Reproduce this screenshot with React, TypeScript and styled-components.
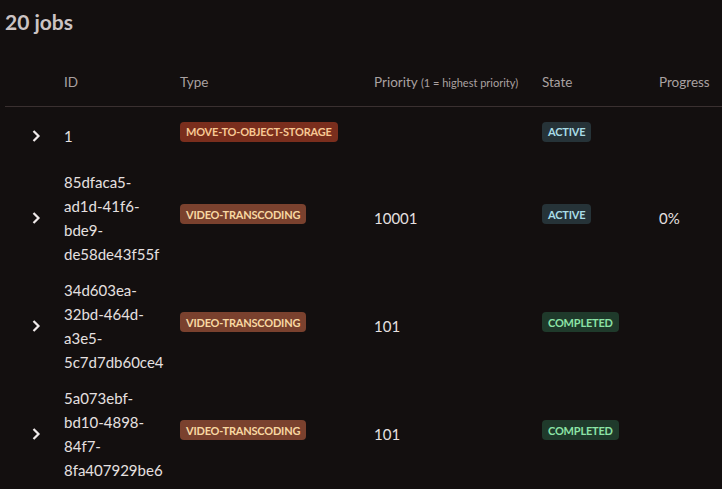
import React from 'react';
import styled, { createGlobalStyle } from 'styled-components';

type JobState = 'active' | 'completed';
type JobType = 'move-to-object-storage' | 'video-transcoding';

type Job = {
  id: string;
  type: JobType;
  priority?: number;
  state: JobState;
  progress?: number;
};

const jobs: Job[] = [
  { id: '1', type: 'move-to-object-storage', state: 'active' },
  { id: '85dfaca5-ad1d-41f6-bde9-de58de43f55f', type: 'video-transcoding', priority: 10001, state: 'active', progress: 0 },
  { id: '34d603ea-32bd-464d-a3e5-5c7d7db60ce4', type: 'video-transcoding', priority: 101, state: 'completed' },
  { id: '5a073ebf-bd10-4898-84f7-8fa407929be6', type: 'video-transcoding', priority: 101, state: 'completed' },
];

const typeColors: Record<JobType, { bg: string; fg: string }> = {
  'move-to-object-storage': { bg: '#7a2e1d', fg: '#f7c893' },
  'video-transcoding': { bg: '#7a412e', fg: '#f8d8a2' },
};

const stateColors: Record<JobState, { bg: string; fg: string }> = {
  active: { bg: '#263338', fg: '#a9dde6' },
  completed: { bg: '#1f3a2b', fg: '#8ce3a6' },
};

const GlobalStyle = createGlobalStyle`
  body {
    margin: 0;
    background: #130f0f;
    color: #e6e0e0;
    font-family: Lato, "Noto Sans", sans-serif;
    overflow: hidden;
  }
`;

const Page = styled.div`
  padding: 0 0 0 5px;
`;

const Title = styled.h1`
  margin: 8px 0 0;
  font-size: 21px;
  line-height: 28px;
  font-weight: 700;
  color: #cbc3c3;
`;

const Grid = styled.div`
  display: grid;
  grid-template-columns: 59px 116px 194px 168px 117px 1fr;
  margin-top: 36px;
`;

const HeadRow = styled.div`
  display: contents;
`;

const HeadCell = styled.div`
  font-size: 13.5px;
  line-height: 20px;
  color: #aaa1a1;
  padding-bottom: 13px;
  border-bottom: 1px solid #3a3030;
  white-space: nowrap;
`;

const HeadNote = styled.span`
  font-size: 11px;
`;

const Row = styled.div`
  display: contents;
`;

const Cell = styled.div`
  display: flex;
  align-items: center;
  min-height: 57px;
  padding: 6px 0;
  box-sizing: border-box;
  font-size: 15px;
  line-height: 24px;
`;

const ToggleCell = styled(Cell)`
  padding-left: 27px;
`;

// narrow column so uuids break at their dashes
const IdText = styled.div`
  width: 100px;
`;

const Badge = styled.span<{ $bg: string; $fg: string }>`
  display: inline-block;
  margin-bottom: 8px;
  padding: 2.5px 6px;
  border-radius: 4px;
  background: ${(p) => p.$bg};
  color: ${(p) => p.$fg};
  font-size: 11px;
  line-height: 15px;
  font-weight: 700;
  letter-spacing: -0.2px;
  text-transform: uppercase;
  white-space: nowrap;
`;

const Chevron = () => (
  <svg width="9" height="12" viewBox="0 0 9 12" fill="none">
    <polyline points="1.5,1 6.5,6 1.5,11" stroke="#f0eaea" strokeWidth="2.2" />
  </svg>
);

const App = () => {
  return (
    <>
      <GlobalStyle />
      <Page>
        <Title>20 jobs</Title>
        <Grid>
          <HeadRow>
            <HeadCell />
            <HeadCell>ID</HeadCell>
            <HeadCell>Type</HeadCell>
            <HeadCell>
              Priority <HeadNote>(1 = highest priority)</HeadNote>
            </HeadCell>
            <HeadCell>State</HeadCell>
            <HeadCell>Progress</HeadCell>
          </HeadRow>
          {jobs.map((job) => (
            <Row key={job.id}>
              <ToggleCell>
                <Chevron />
              </ToggleCell>
              <Cell>
                <IdText>{job.id}</IdText>
              </Cell>
              <Cell>
                <Badge $bg={typeColors[job.type].bg} $fg={typeColors[job.type].fg}>
                  {job.type}
                </Badge>
              </Cell>
              <Cell>{job.priority}</Cell>
              <Cell>
                <Badge $bg={stateColors[job.state].bg} $fg={stateColors[job.state].fg}>
                  {job.state}
                </Badge>
              </Cell>
              <Cell>{job.progress !== undefined ? `${job.progress}%` : ''}</Cell>
            </Row>
          ))}
        </Grid>
      </Page>
    </>
  );
};

export default App;
